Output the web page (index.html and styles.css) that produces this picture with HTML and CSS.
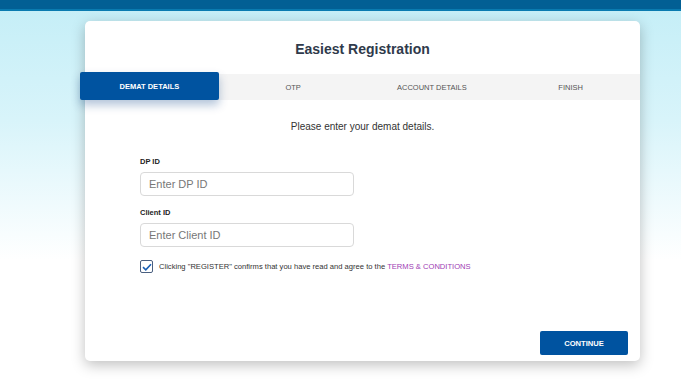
FILE: index.html
```html
<!DOCTYPE html>
<html lang="en">
<head>
  <meta charset="UTF-8">
  <meta name="viewport" content="width=device-width, initial-scale=1.0">
  <title>Easiest Registration</title>
  <link rel="stylesheet" href="styles.css">
</head>
<body>
  <div class="topbar"></div>
  <div class="page">
    <div class="card">
      <h1>Easiest Registration</h1>
      <div class="steps">
        <div class="step active">DEMAT DETAILS</div>
        <div class="step">OTP</div>
        <div class="step">ACCOUNT DETAILS</div>
        <div class="step">FINISH</div>
      </div>
      <p class="intro">Please enter your demat details.</p>
      <form class="form">
        <div class="form-group">
          <label for="dp-id">DP ID</label>
          <input type="text" id="dp-id" placeholder="Enter DP ID">
        </div>
        <div class="form-group">
          <label for="client-id">Client ID</label>
          <input type="text" id="client-id" placeholder="Enter Client ID">
        </div>
        <div class="agree">
          <span class="check">
            <svg width="10" height="8" viewBox="0 0 10 8"><path d="M1 4.2 L3.8 6.8 L9 1.2" fill="none" stroke="#1a5fb4" stroke-width="1.6"/></svg>
          </span>
          <span>Clicking "REGISTER" confirms that you have read and agree to the <a href="#" class="terms">TERMS &amp; CONDITIONS</a></span>
        </div>
      </form>
      <div class="actions">
        <button type="button">CONTINUE</button>
      </div>
    </div>
  </div>
</body>
</html>
```

FILE: styles.css
```css
body {
  margin: 0;
  font-family: 'Liberation Sans', Arial, sans-serif;
  color: #333;
  background: linear-gradient(#c4eef7 0px, #d8f4fa 120px, #ffffff 260px);
  height: 381px;
  overflow: hidden;
}
.topbar {
  height: 9px;
  background: #025f94;
  border-bottom: 2px solid #0a7bb0;
}
.page {
  padding: 10px 41px 0 85px;
}
.card {
  width: 555px;
  height: 340px;
  background: #fff;
  border-radius: 5px;
  box-shadow: 0 4px 14px rgba(0,0,0,0.25);
  display: flex;
  flex-direction: column;
}
h1 {
  margin: 0;
  padding-top: 20px;
  height: 33px;
  text-align: center;
  font-size: 14px;
  font-weight: 700;
  color: #2f3a4b;
}
.steps {
  display: flex;
  height: 26px;
  background: #f4f4f4;
}
.step {
  flex: 1;
  display: flex;
  align-items: center;
  justify-content: center;
  font-size: 7.5px;
  color: #555;
}
.step.active {
  margin: -2px 5px 0 -5px;
  height: 28px;
  background: #0053a0;
  color: #fff;
  font-weight: 700;
  border-radius: 2px;
  box-shadow: 0 5px 10px rgba(0,60,130,0.3);
}
.intro {
  margin: 21px 0 0;
  text-align: center;
  font-size: 10px;
  color: #333;
}
.form {
  padding: 25px 0 0 55px;
  display: flex;
  flex-direction: column;
  gap: 12px;
}
.form-group {
  display: flex;
  flex-direction: column;
  gap: 6px;
}
label {
  font-size: 7.5px;
  font-weight: 700;
  color: #222;
}
input {
  width: 214px;
  height: 24px;
  box-sizing: border-box;
  padding: 0 8px;
  border: 1px solid #d9d9d9;
  border-radius: 4px;
  font-family: inherit;
  font-size: 11px;
}
input::placeholder {
  color: #777;
}
.agree {
  margin-top: 1px;
  display: flex;
  align-items: center;
  gap: 6px;
  font-size: 7.6px;
  color: #333;
}
.check {
  width: 13px;
  height: 13px;
  box-sizing: border-box;
  border: 1px solid #4a5f80;
  border-radius: 2px;
  display: flex;
  align-items: center;
  justify-content: center;
}
.terms {
  color: #a03cb4;
  text-decoration: none;
}
.actions {
  margin-top: auto;
  padding: 0 12px 6px 0;
  display: flex;
  justify-content: flex-end;
}
button {
  width: 88px;
  height: 24px;
  background: #0053a0;
  color: #fff;
  border: none;
  border-radius: 2px;
  font-family: inherit;
  font-size: 7.6px;
  font-weight: 700;
  cursor: pointer;
}
```
